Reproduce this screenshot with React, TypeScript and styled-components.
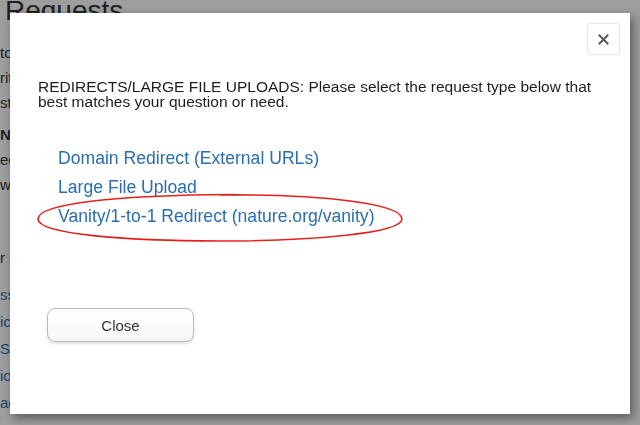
import React from "react";
import styled, { createGlobalStyle } from "styled-components";

const GlobalStyle = createGlobalStyle`
  html, body {
    margin: 0;
    padding: 0;
    width: 640px;
    height: 425px;
    overflow: hidden;
  }
  body {
    font-family: "Liberation Sans", Arial, sans-serif;
    background: #ffffff;
  }
`;

const pageLines = [
  { text: "to submit a request for your web site", top: 16, kind: "text" },
  { text: "rity of our editors will review", top: 10, kind: "text" },
  { text: "st one week for completion.", top: 10, kind: "text" },
  { text: "NTACTS", top: 17, kind: "bold" },
  { text: "ected to the staff contact", top: 10, kind: "text" },
  { text: "work with on your page.", top: 10, kind: "text" },
  { text: "r categories", top: 58, kind: "text" },
  { text: "ssions", top: 22, kind: "link" },
  { text: "ication requests", top: 12, kind: "link" },
  { text: "Site changes", top: 12, kind: "link" },
  { text: "ion updates", top: 12, kind: "link" },
  { text: "adverts", top: 12, kind: "link" },
];

const links = [
  "Domain Redirect (External URLs)",
  "Large File Upload",
  "Vanity/1-to-1 Redirect (nature.org/vanity)",
];

const App = () => {
  return (
    <>
      <GlobalStyle />
      <Page>
        <PageTitle>Requests</PageTitle>
        {pageLines.map((line) => (
          <PageLine key={line.text} $top={line.top} $kind={line.kind}>
            {line.text}
          </PageLine>
        ))}
      </Page>
      <Backdrop>
        <Modal>
          <ModalHeader>
            <CloseX type="button" aria-label="Close">
              <svg width="11" height="11" viewBox="0 0 11 11">
                <path
                  d="M1.5 1.5 L9.5 9.5 M9.5 1.5 L1.5 9.5"
                  stroke="#5a5a5a"
                  strokeWidth="2"
                  strokeLinecap="square"
                />
              </svg>
            </CloseX>
          </ModalHeader>
          <Intro>
            REDIRECTS/LARGE FILE UPLOADS: Please select the request type below that
            best matches your question or need.
          </Intro>
          <LinkList>
            {links.map((label, i) => (
              <LinkItem key={label}>
                <RequestLink href="#">{label}</RequestLink>
                {i === links.length - 1 && (
                  <Circle width="372" height="52" viewBox="0 0 372 52">
                    <path
                      d="M186 3 C 290 2, 368 12, 368 27 C 368 41, 280 49, 186 49 C 90 49, 4 42, 4 27 C 4 12, 80 3, 200 2.5"
                      fill="none"
                      stroke="#e3211c"
                      strokeWidth="1.6"
                    />
                  </Circle>
                )}
              </LinkItem>
            ))}
          </LinkList>
          <Footer>
            <CloseButton type="button">Close</CloseButton>
          </Footer>
        </Modal>
      </Backdrop>
    </>
  );
};

export default App;

const Page = styled.div`
  width: 640px;
  height: 425px;
  box-sizing: border-box;
  overflow: hidden;
`;

const PageTitle = styled.h1`
  margin: -7px 0 0 5px;
  font-size: 28px;
  font-weight: 400;
  color: #333;
  line-height: 36px;
`;

const PageLine = styled.div<{ $top: number; $kind: string }>`
  margin-top: ${(p) => p.$top}px;
  font-size: 15px;
  line-height: 15px;
  white-space: nowrap;
  font-weight: ${(p) => (p.$kind === "bold" ? 700 : 400)};
  color: ${(p) => (p.$kind === "link" ? "#2a6ead" : "#333")};
`;

const Backdrop = styled.div`
  position: fixed;
  inset: 0;
  background: rgba(0, 0, 0, 0.38);
  display: flex;
  padding: 13px 10px 11px 10px;
  box-sizing: border-box;
`;

const Modal = styled.div`
  flex: 1;
  background: #ffffff;
  box-shadow: 3px 4px 10px rgba(0, 0, 0, 0.45);
  display: flex;
  flex-direction: column;
  padding: 10px 10px 0 28px;
  box-sizing: border-box;
`;

const ModalHeader = styled.div`
  display: flex;
  justify-content: flex-end;
`;

const CloseX = styled.button`
  width: 33px;
  height: 32px;
  padding: 0;
  border: 1px solid #e6e6e6;
  border-radius: 3px;
  background: #fff;
  display: flex;
  align-items: center;
  justify-content: center;
  cursor: pointer;
`;

const Intro = styled.p`
  margin: 24px 0 0 0;
  font-size: 15.5px;
  line-height: 15px;
  color: #1d1d1d;
  width: 562px;
`;

const LinkList = styled.ul`
  list-style: none;
  margin: 40px 0 0 0;
  padding: 0 0 0 20px;
  display: flex;
  flex-direction: column;
  gap: 11px;
`;

const LinkItem = styled.li`
  position: relative;
  height: 18px;
  line-height: 18px;
`;

const RequestLink = styled.a`
  font-size: 17.6px;
  color: #2a6ead;
  text-decoration: none;
  white-space: nowrap;
`;

const Circle = styled.svg`
  position: absolute;
  left: -24px;
  top: -15px;
  pointer-events: none;
`;

const Footer = styled.div`
  margin-top: 83px;
  padding-left: 9px;
`;

const CloseButton = styled.button`
  width: 147px;
  height: 34px;
  border: 1px solid #b9b9b9;
  border-radius: 8px;
  background: linear-gradient(#ffffff, #f6f6f6);
  box-shadow: 0 2px 3px rgba(0, 0, 0, 0.12);
  font-family: "Liberation Sans", Arial, sans-serif;
  font-size: 15px;
  color: #333;
  cursor: pointer;
`;
